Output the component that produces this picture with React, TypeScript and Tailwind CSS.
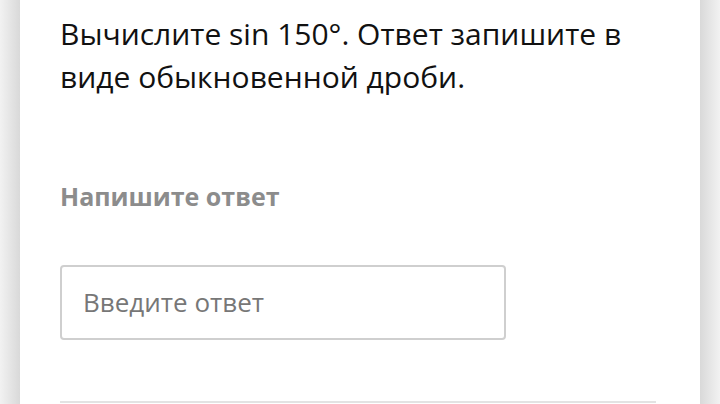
import React from "react";

export default function App() {
  return (
    <div
      className="w-[720px] h-[404px] overflow-hidden flex bg-[#efefef]"
      style={{ fontFamily: '"Open Sans", sans-serif' }}
    >
      <div className="w-[20px] h-full bg-gradient-to-r from-[#f2f2f2] to-[#d9d9d9]" />
      <div className="w-[680px] h-full bg-white flex flex-col pl-[40px] pr-[40px] pt-[12px]">
        <p className="text-[30px] leading-[43px] text-[#111]">
          Вычислите sin 150°. Ответ запишите в виде обыкновенной дроби.
        </p>
        <p className="mt-[81px] text-[25px] leading-[34px] font-bold text-[#8c8c8c]">
          Напишите ответ
        </p>
        <div className="mt-[52px] w-[446px] h-[75px] shrink-0 border-2 border-[#cfcfcf] rounded-[4px] flex items-center pl-[21px]">
          <span className="text-[26px] text-[#777]">Введите ответ</span>
        </div>
        <div className="mt-[61px] w-[596px] h-[2px] shrink-0 bg-[#e3e3e3]" />
      </div>
      <div className="w-[20px] h-full bg-gradient-to-r from-[#d9d9d9] to-[#f2f2f2]" />
    </div>
  );
}
